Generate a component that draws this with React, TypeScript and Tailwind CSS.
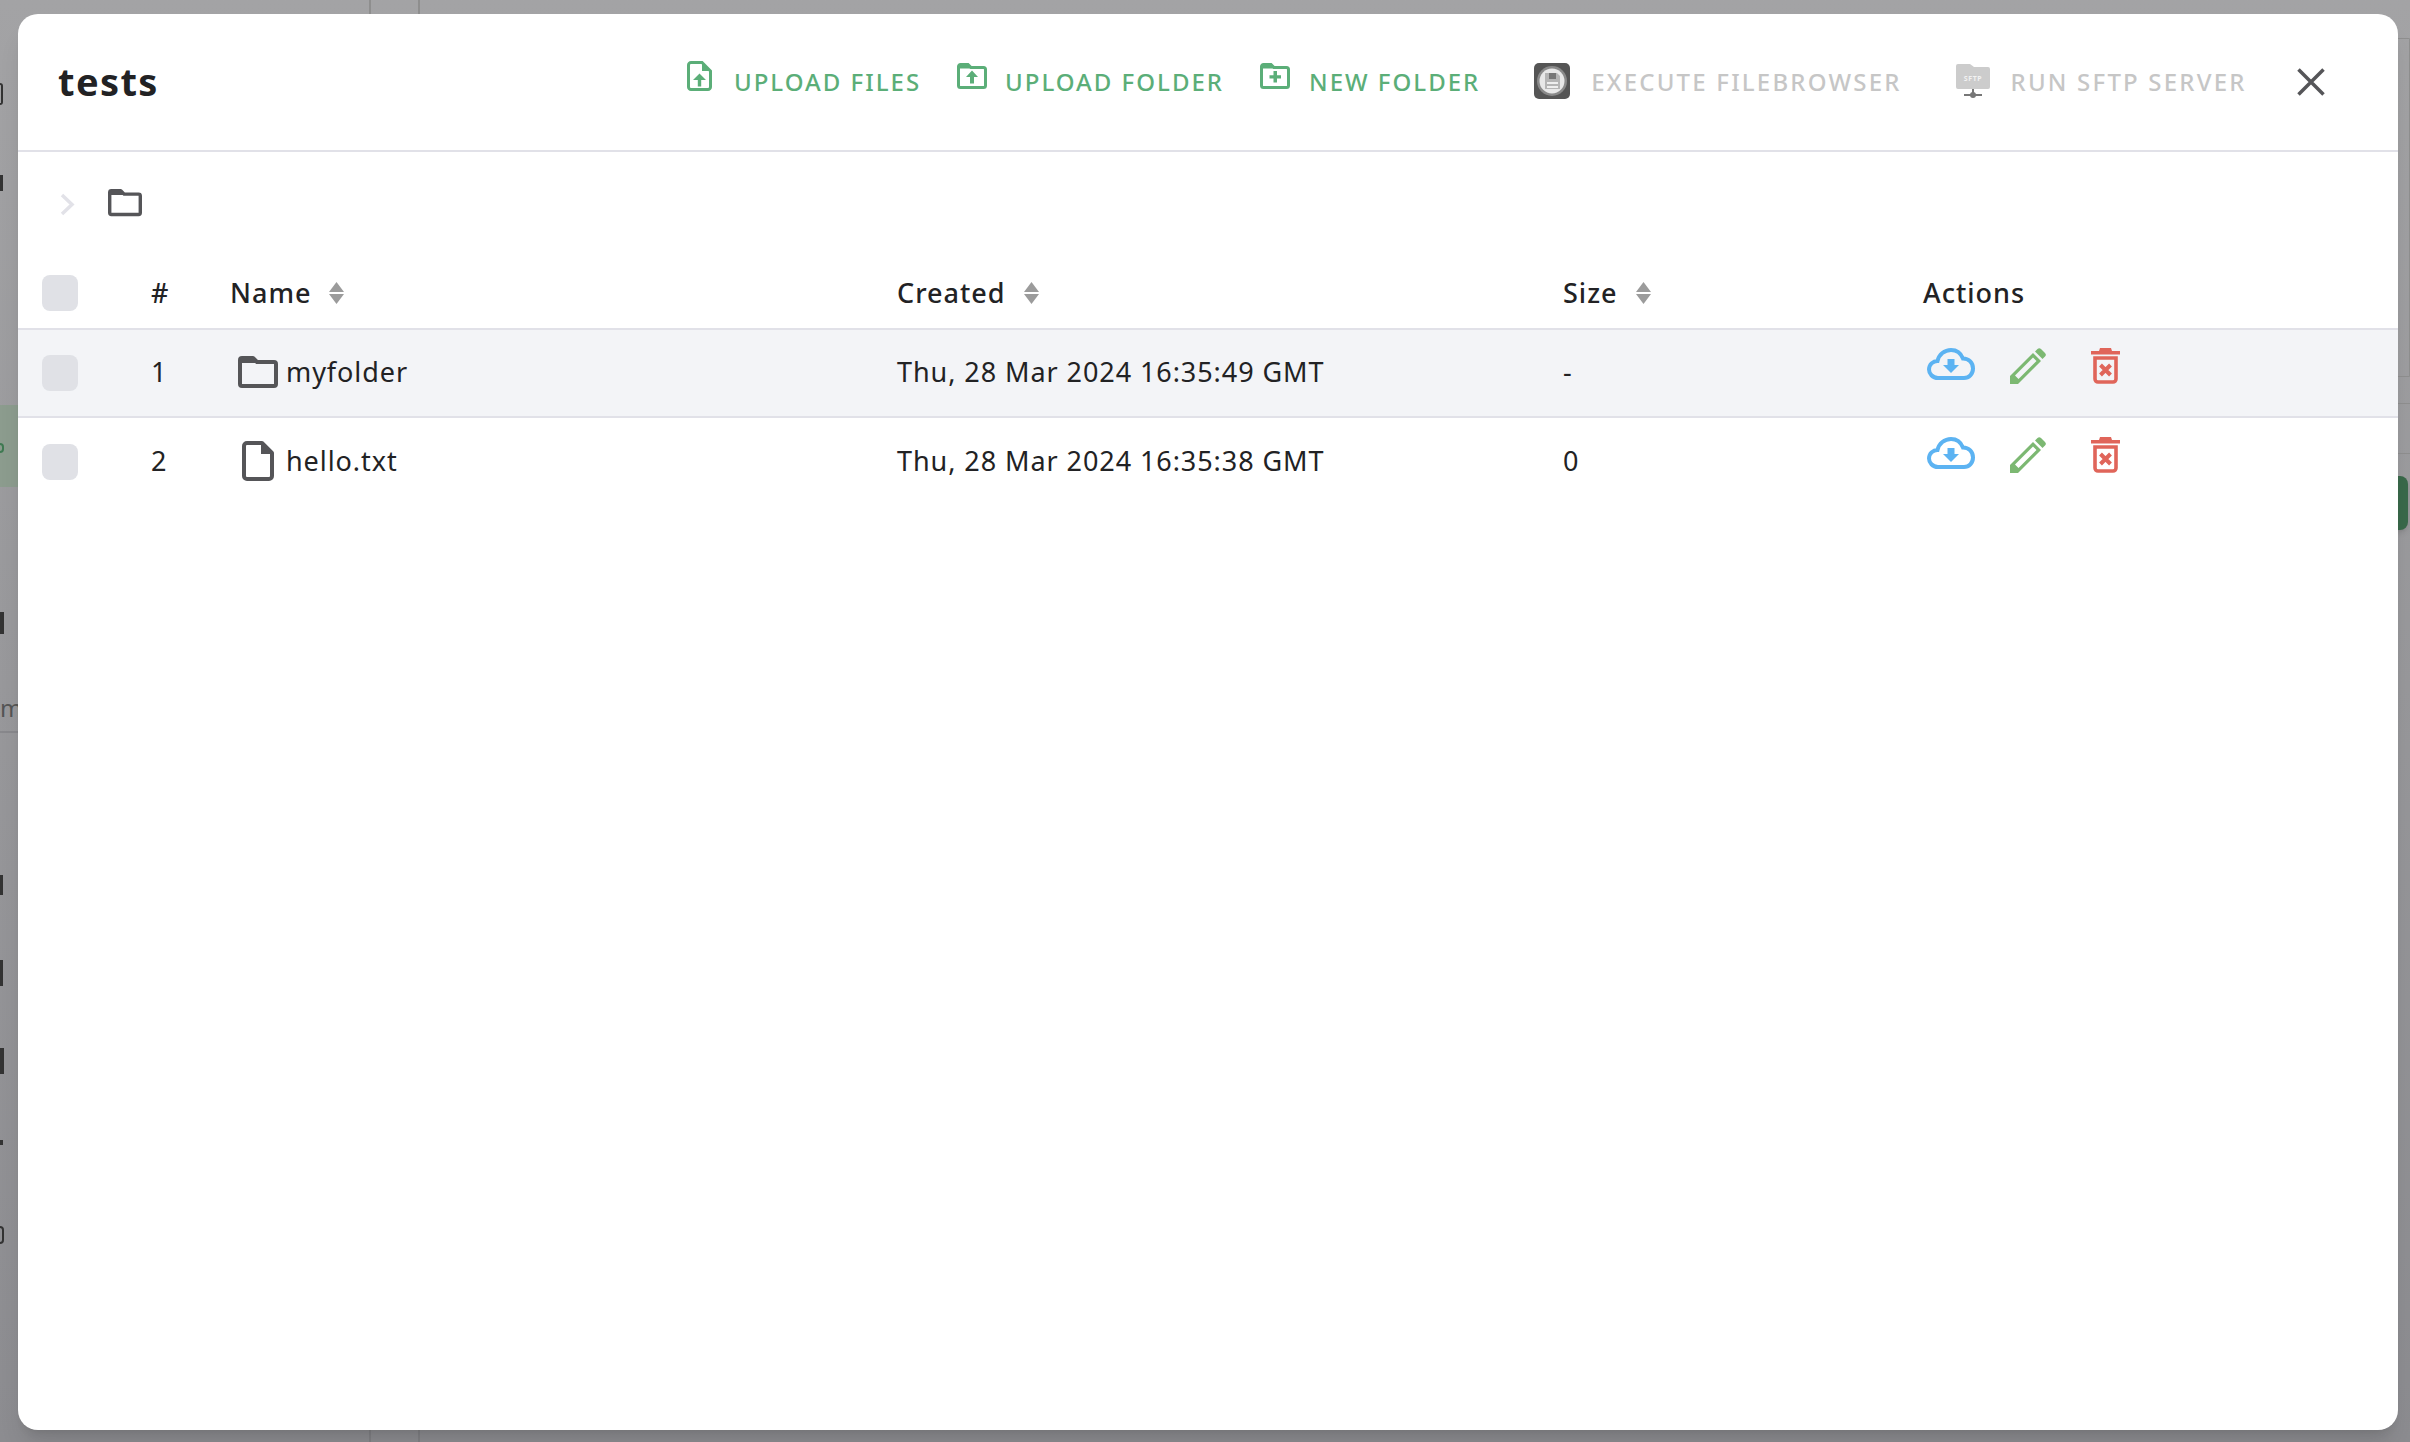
import type { ReactNode } from "react";

const GREEN = "#5bae78";
const GREY = "#555558";

function FileUploadIcon() {
  return (
    <svg width="25" height="30" viewBox="0 0 25 30" className="shrink-0">
      <path d="M4 1.5H15L23.5 10V26a2.5 2.5 0 0 1-2.5 2.5H4A2.5 2.5 0 0 1 1.5 26V4A2.5 2.5 0 0 1 4 1.5Z" fill="none" stroke={GREEN} strokeWidth="3" />
      <path d="M15 1.5L23.5 10H15Z" fill={GREEN} />
      <path d="M12.5 12.5L19 19H14.2V25.5H10.8V19H6Z" fill={GREEN} />
    </svg>
  );
}

function FolderUploadIcon({ plus }: { plus?: boolean }) {
  return (
    <svg width="30" height="26" viewBox="0 0 30 26" className="shrink-0">
      <path d="M3.5 1.5H11L14 4.5H26.5a2 2 0 0 1 2 2V22.5a2 2 0 0 1-2 2H3.5a2 2 0 0 1-2-2V3.5a2 2 0 0 1 2-2Z" fill="none" stroke={GREEN} strokeWidth="3" />
      <path d="M2 2H11L14 5.5H2Z" fill={GREEN} />
      {plus ? (
        <path d="M13.5 8H17V12.2H21V15.4H17V19.5H13.5V15.4H9.5V12.2H13.5Z" fill={GREEN} />
      ) : (
        <path d="M15 7.5L21 14H17V20.5H13V14H9Z" fill={GREEN} />
      )}
    </svg>
  );
}

function ExecuteIcon() {
  return (
    <svg width="36" height="36" viewBox="0 0 36 36" className="shrink-0">
      <rect width="36" height="36" rx="5" fill="#555555" />
      <circle cx="18" cy="18" r="15" fill="#8a8a8a" />
      <circle cx="18" cy="18" r="12.5" fill="#e8e8e8" />
      <path d="M11 10H23L26 13V26H11Z" fill="#b5b5b5" />
      <rect x="15" y="10" width="7" height="6" fill="#777777" />
      <rect x="13" y="19" width="11" height="2" fill="#eeeeee" />
      <rect x="13" y="23" width="11" height="2" fill="#eeeeee" />
    </svg>
  );
}

function SftpIcon() {
  return (
    <svg width="34" height="36" viewBox="0 0 34 36" className="shrink-0">
      <path d="M2 1H14L18 4H32a2 2 0 0 1 2 2V24a2 2 0 0 1-2 2H2a2 2 0 0 1-2-2V3a2 2 0 0 1 2-2Z" fill="#cccccc" />
      <text x="17" y="18" textAnchor="middle" fontSize="7" fontWeight="700" letterSpacing="0.6" fill="#f2f2f2" fontFamily="'Noto Sans', sans-serif">
        SFTP
      </text>
      <path d="M17 26V31M8 32H26" stroke="#777777" strokeWidth="2" />
      <circle cx="17" cy="32" r="3" fill="#777777" />
    </svg>
  );
}

function FolderIcon({ size = 40 }: { size?: number }) {
  return (
    <svg width={size} height={size * 0.8} viewBox="0 0 40 32">
      <path d="M4 2H15L19 6H36a2 2 0 0 1 2 2V28a2 2 0 0 1-2 2H4a2 2 0 0 1-2-2V4a2 2 0 0 1 2-2Z" fill="none" stroke={GREY} strokeWidth="4" strokeLinejoin="round" />
      <path d="M3 1H15L20 7H2Z" fill={GREY} />
    </svg>
  );
}

function FileIcon() {
  return (
    <svg width="32" height="40" viewBox="0 0 32 40">
      <path d="M5 2H20L30 12V35a3 3 0 0 1-3 3H5a3 3 0 0 1-3-3V5a3 3 0 0 1 3-3Z" fill="none" stroke={GREY} strokeWidth="4" strokeLinejoin="round" />
      <path d="M19 2L30 13H19Z" fill={GREY} />
    </svg>
  );
}

function SortIcon() {
  return (
    <svg width="15" height="22" viewBox="0 0 15 22" className="shrink-0">
      <path d="M7.5 0L15 10H0Z" fill="#9b9b9b" />
      <path d="M0 12H15L7.5 22Z" fill="#9b9b9b" />
    </svg>
  );
}

function CloudIcon() {
  return (
    <svg width="48" height="32" viewBox="0 0 48 32">
      <path d="M11 30C5.5 30 2 25.5 2 21.5C2 16.5 6 13 10.5 13C12 6.5 17.5 2 24 2C29.5 2 34 5.5 36 10.5C42 10.5 46 15 46 20.5C46 26 42 30 37 30Z" fill="none" stroke="#5cb3f2" strokeWidth="4" />
      <path d="M20.5 11H27.5V17H32L24 25L16 17H20.5Z" fill="#5cb3f2" />
    </svg>
  );
}

function PencilIcon() {
  return (
    <svg width="36" height="36" viewBox="0 0 36 36">
      <path fillRule="evenodd" d="M0 28L23 5L31 13L8 36H0ZM5 27.5L8.5 31L26.5 13L23 9.5Z" fill="#7cb872" />
      <path d="M25 3.5L27.5 1A2.5 2.5 0 0 1 31 1L35 5A2.5 2.5 0 0 1 35 8.5L32.5 11Z" fill="#7cb872" />
    </svg>
  );
}

function TrashIcon() {
  return (
    <svg width="29" height="36" viewBox="0 0 29 36">
      <path d="M9 0H20L21 3H29V6.5H0V3H8Z" fill="#e0655a" />
      <path d="M4 10H25V31a3 3 0 0 1-3 3H7a3 3 0 0 1-3-3Z" fill="none" stroke="#e0655a" strokeWidth="3.6" />
      <path d="M9.5 17L19.5 27M19.5 17L9.5 27" stroke="#e0655a" strokeWidth="4" />
    </svg>
  );
}

function ToolButton({ icon, label, disabled, className }: { icon: ReactNode; label: string; disabled?: boolean; className: string }) {
  return (
    <button className={`flex items-center ${className}`}>
      <span className={`flex ${disabled ? "-translate-y-[1px]" : "-translate-y-[6px]"}`}>{icon}</span>
      <span className={`text-[24px] font-medium whitespace-nowrap ${disabled ? "tracking-[2.2px] text-[#c6c6c6]" : "tracking-[2px] text-[#5bae78]"}`}>{label}</span>
    </button>
  );
}

const gridCols = "grid grid-cols-[133px_79px_667px_666px_360px_1fr] items-center";

function HeaderCell({ label }: { label: string }) {
  return (
    <div className="flex items-center gap-[18px]">
      <span className="text-[27px] font-medium tracking-[1px] text-[#222224]">{label}</span>
      <SortIcon />
    </div>
  );
}

function Row({ n, icon, name, created, size, striped, last }: { n: number; icon: ReactNode; name: string; created: string; size: string; striped?: boolean; last?: boolean }) {
  return (
    <div className={`${gridCols} h-[88px] text-[27px] tracking-[0.93px] text-[#222224] ${last ? "" : "border-b-2 border-[#e1e1e8]"} ${striped ? "bg-[#f3f4f7]" : ""}`}>
      <div className="pl-[24px]">
        <div className="h-[36px] w-[36px] rounded-lg bg-[#e0e1e6]" />
      </div>
      <div className="-translate-y-[1px]">{n}</div>
      <div className="flex -translate-y-[1px] items-center">
        <div className="flex w-[56px] justify-center">{icon}</div>
        <span>{name}</span>
      </div>
      <div className="-translate-y-[1px]">{created}</div>
      <div className="-translate-y-[1px]">{size}</div>
      <div className="flex items-start pb-[14px] pl-[4px]">
        <CloudIcon />
        <div className="ml-[35px]"><PencilIcon /></div>
        <div className="ml-[45px]"><TrashIcon /></div>
      </div>
    </div>
  );
}

export default function App() {
  return (
    <div className="relative h-[1442px] w-[2410px] overflow-hidden bg-gradient-to-b from-[#a3a3a5] to-[#8c8c90] font-['Noto_Sans',sans-serif]">
      {/* page behind the backdrop, mostly hidden by the dialog */}
      <div className="absolute left-[369px] top-0 h-[14px] w-[2px] bg-[#8e8e8e]" />
      <div className="absolute left-[418px] top-0 h-[14px] w-[2px] bg-[#8e8e8e]" />
      <div className="absolute bottom-0 left-[369px] h-[12px] w-[2px] bg-[#808084]" />
      <div className="absolute bottom-0 left-[418px] h-[12px] w-[2px] bg-[#808084]" />
      <div className="absolute left-0 top-[405px] h-[82px] w-[18px] bg-[#8c9c8e]" />
      <div className="absolute left-0 top-[443px] h-[10px] w-[4px] rounded-r-full border-2 border-l-0 border-[#3f7a52]" />
      <div className="absolute left-0 top-[83px] h-[22px] w-[3px] rounded-r-full border-2 border-l-0 border-[#333333]" />
      <div className="absolute left-0 top-[175px] h-[16px] w-[3px] bg-[#333333]" />
      <div className="absolute left-0 top-[612px] h-[22px] w-[4px] bg-[#333333]" />
      <div className="absolute left-0 top-[731px] h-[2px] w-[18px] bg-[#88888c]" />
      <div className="absolute left-0 top-[696px] text-[24px] leading-[24px] text-[#555555]">m</div>
      <div className="absolute left-0 top-[875px] h-[20px] w-[3px] bg-[#333333]" />
      <div className="absolute left-0 top-[960px] h-[26px] w-[3px] bg-[#333333]" />
      <div className="absolute left-0 top-[1048px] h-[26px] w-[4px] bg-[#333333]" />
      <div className="absolute left-0 top-[1140px] h-[5px] w-[3px] bg-[#333333]" />
      <div className="absolute left-0 top-[1226px] h-[18px] w-[4px] rounded-r-full border-2 border-l-0 border-[#333333]" />
      <div className="absolute right-0 top-[38px] h-[339px] w-[40px] rounded-l-2xl border border-[#8f8f8f]" />
      <div className="absolute right-0 top-[403px] h-[1px] w-[14px] bg-[#8f8f8f]" />
      <div className="absolute right-0 top-[453px] h-[1px] w-[14px] bg-[#8f8f8f]" />
      <div className="absolute left-[2390px] top-[476px] h-[54px] w-[18px] rounded-lg bg-[#39694a] shadow-md" />

      <div className="relative ml-[18px] mt-[14px] h-[1416px] w-[2380px] rounded-[20px] bg-white shadow-xl">
        <div className="flex h-[138px] items-center border-b-2 border-[#e1e1e8] pl-[40px]">
          <h1 className="w-[629px] -translate-y-[1px] text-[38px] font-bold tracking-[1.4px] text-[#222224]">tests</h1>
          <ToolButton icon={<FileUploadIcon />} label="UPLOAD FILES" className="gap-[22px]" />
          <ToolButton icon={<FolderUploadIcon />} label="UPLOAD FOLDER" className="ml-[36px] gap-[18px]" />
          <ToolButton icon={<FolderUploadIcon plus />} label="NEW FOLDER" className="ml-[36px] gap-[19px]" />
          <ToolButton icon={<ExecuteIcon />} label="EXECUTE FILEBROWSER" disabled className="ml-[54px] gap-[21px]" />
          <ToolButton icon={<SftpIcon />} label="RUN SFTP SERVER" disabled className="ml-[54px] gap-[21px]" />
          <svg width="28" height="28" viewBox="0 0 28 28" className="ml-[50px] shrink-0">
            <path d="M1.5 1.5L26.5 26.5M26.5 1.5L1.5 26.5" stroke={GREY} strokeWidth="3.5" />
          </svg>
        </div>

        <div className="flex h-[102px] items-center pl-[42px]">
          <svg width="15" height="23" viewBox="0 0 15 23" className="mt-[2px]">
            <path d="M2 2L12 11.5L2 21" fill="none" stroke="#e2e2e8" strokeWidth="3.5" />
          </svg>
          <div className="ml-[33px]"><FolderIcon size={34} /></div>
        </div>

        <div className={`${gridCols} h-[76px] border-b-2 border-[#e1e1e8] pt-[4px]`}>
          <div className="pl-[24px]">
            <div className="h-[36px] w-[36px] rounded-lg bg-[#e0e1e6]" />
          </div>
          <div className="text-[27px] font-medium text-[#222224]">#</div>
          <HeaderCell label="Name" />
          <HeaderCell label="Created" />
          <HeaderCell label="Size" />
          <div className="text-[27px] font-medium tracking-[1px] text-[#222224]">Actions</div>
        </div>

        <Row n={1} icon={<FolderIcon />} name="myfolder" created="Thu, 28 Mar 2024 16:35:49 GMT" size="-" striped />
        <Row n={2} icon={<FileIcon />} name="hello.txt" created="Thu, 28 Mar 2024 16:35:38 GMT" size="0" last />
      </div>
    </div>
  );
}
